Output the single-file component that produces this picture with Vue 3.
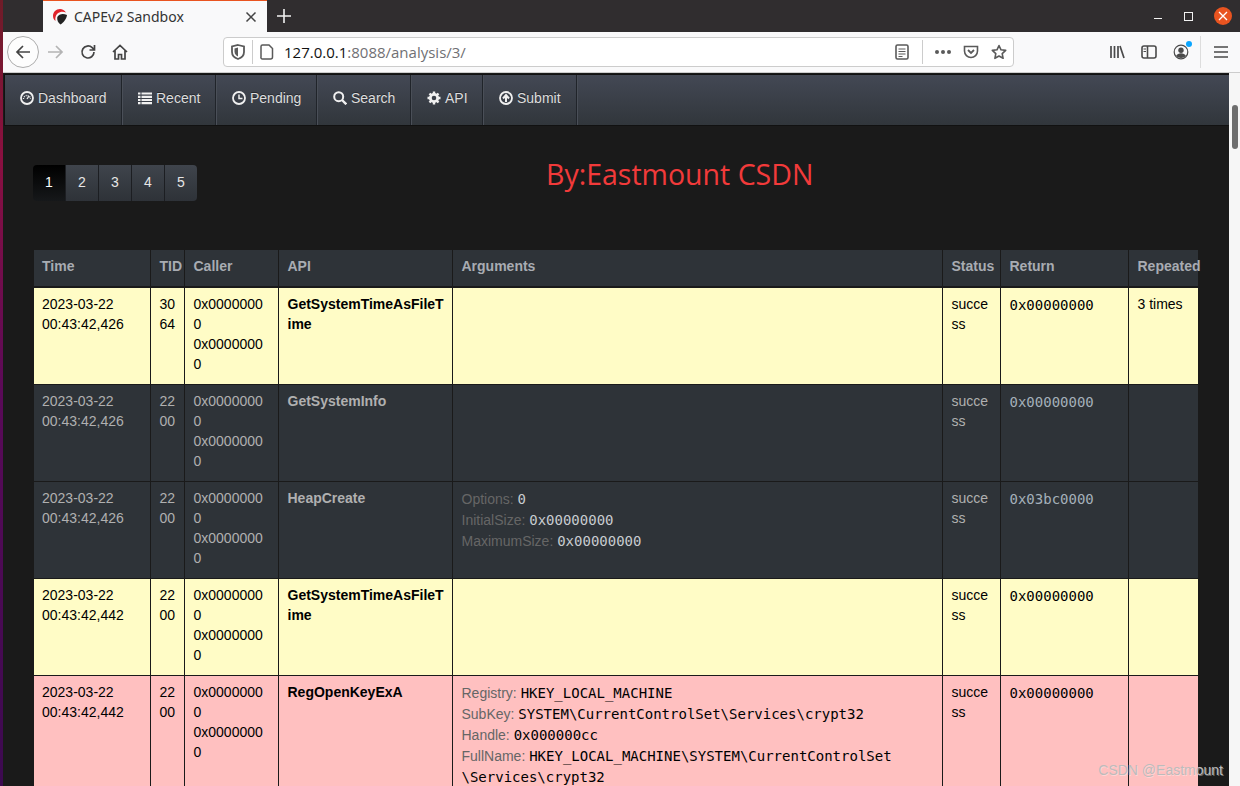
<script setup>
const navItems = [
  { label: "Dashboard", icon: "dash", width: 118 },
  { label: "Recent", icon: "list", width: 94 },
  { label: "Pending", icon: "clock", width: 101 },
  { label: "Search", icon: "search", width: 94 },
  { label: "API", icon: "cog", width: 72 },
  { label: "Submit", icon: "up", width: 94 },
];

const pages = [1, 2, 3, 4, 5];
const callers = ["0x00000000", "0x00000000"];

const rows = [
  { time: "2023-03-22 00:43:42,426", tid: "3064", api: "GetSystemTimeAsFileTime", args: [], ret: "0x00000000", repeated: "3 times", kind: "yellow" },
  { time: "2023-03-22 00:43:42,426", tid: "2200", api: "GetSystemInfo", args: [], ret: "0x00000000", repeated: "", kind: "dark" },
  {
    time: "2023-03-22 00:43:42,426", tid: "2200", api: "HeapCreate",
    args: [["Options", "0"], ["InitialSize", "0x00000000"], ["MaximumSize", "0x00000000"]],
    ret: "0x03bc0000", repeated: "", kind: "dark",
  },
  { time: "2023-03-22 00:43:42,442", tid: "2200", api: "GetSystemTimeAsFileTime", args: [], ret: "0x00000000", repeated: "", kind: "yellow" },
  {
    time: "2023-03-22 00:43:42,442", tid: "2200", api: "RegOpenKeyExA",
    args: [
      ["Registry", "HKEY_LOCAL_MACHINE"],
      ["SubKey", "SYSTEM\\CurrentControlSet\\Services\\crypt32"],
      ["Handle", "0x000000cc"],
      ["FullName", "HKEY_LOCAL_MACHINE\\SYSTEM\\CurrentControlSet\u200b\\Services\\crypt32"],
    ],
    ret: "0x00000000", repeated: "", kind: "pink",
  },
];
</script>

<template>
  <div class="window">
    <div class="titlebar">
      <div class="tab">
        <svg class="favicon" viewBox="0 0 16 17" width="16" height="17">
          <path d="M8 1C4 1 1 4 1 8c0 2 1 4 2.500 5C3 10 3.500 7.500 5.500 5.500 8 3.500 11 3 14 4.500 12.500 2.300 10.500 1 8 1z" fill="#e0242c" />
          <path d="M5.300 9C7 6 11 5.300 15 7c-.5 4-3.500 7.500-6.500 9.500C6 14.500 4.800 12 5.300 9z" fill="#222" />
        </svg>
        <span class="tab-title">CAPEv2 Sandbox</span>
        <svg class="tab-close" viewBox="0 0 12 12" width="12" height="12">
          <path d="M1.500 1.500l9 9m0-9l-9 9" stroke="#444" stroke-width="1.500" fill="none" />
        </svg>
      </div>
      <svg class="new-tab" viewBox="0 0 14 14" width="14" height="14">
        <path d="M7 0v14M0 7h14" stroke="#f2f2f2" stroke-width="1.600" />
      </svg>
      <div class="win-controls">
        <span class="win-min"></span>
        <span class="win-max"></span>
        <span class="win-close">
          <svg viewBox="0 0 10 10" width="10" height="10">
            <path d="M1 1l8 8m0-8l-8 8" stroke="#fff" stroke-width="1.300" />
          </svg>
        </span>
      </div>
    </div>

    <div class="toolbar">
      <div class="tb-btn back">
        <svg viewBox="0 0 16 16" width="16" height="16"><path d="M15 8H2M8 2L2 8l6 6" stroke="#444" stroke-width="1.700" fill="none" /></svg>
      </div>
      <div class="tb-btn">
        <svg viewBox="0 0 16 16" width="16" height="16"><path d="M0 8h14M8 2l6 6-6 6" stroke="#b4b4b4" stroke-width="1.700" fill="none" /></svg>
      </div>
      <div class="tb-btn">
        <svg viewBox="0 0 16 16" width="16" height="16"><path d="M14 8a6 6 0 1 1-1.800-4.300L14 5.500M14.500 1v5h-5" stroke="#444" stroke-width="1.700" fill="none" /></svg>
      </div>
      <div class="tb-btn">
        <svg viewBox="0 0 16 16" width="16" height="16"><path d="M1 8l7-6.500L15 8M3 6.500V15h3.500v-4.500h3V15H13V6.500" stroke="#444" stroke-width="1.700" fill="none" /></svg>
      </div>

      <div class="urlbar">
        <svg class="shield" viewBox="0 0 14 16" width="14" height="16"><path d="M7 1l6 1.500V8c0 3.500-3 6-6 7-3-1-6-3.500-6-7V2.500z" stroke="#5a5a5a" stroke-width="1.800" fill="none" /><path d="M7 3.500v9c-2-1-3.500-2.500-3.500-5V4.500z" fill="#5a5a5a" /></svg>
        <span class="url-sep"></span>
        <svg class="doc" viewBox="0 0 14 16" width="14" height="16"><path d="M2.500 1H9l3.500 3.500V13a2 2 0 0 1-2 2h-8a1.500 1.500 0 0 1-1.500-2V2.500A1.500 1.500 0 0 1 2.500 1z" stroke="#5a5a5a" stroke-width="1.500" fill="none" /></svg>
        <span class="url"><b>127.0.0.1</b>:8088/analysis/3/</span>
        <div class="url-right">
          <svg viewBox="0 0 14 16" width="14" height="16"><rect x="1" y="1" width="12" height="14" rx="1.500" stroke="#5a5a5a" stroke-width="1.600" fill="none" /><path d="M3.500 5h7M3.500 7.500h7M3.500 10h7M3.500 12.500h4" stroke="#5a5a5a" stroke-width="1" /></svg>
          <span class="url-sep right-sep"></span>
          <span class="dots"><i></i><i></i><i></i></span>
          <svg class="pocket" viewBox="0 0 16 14" width="16" height="14"><path d="M1.500 1.500h13V6a6.500 6.500 0 0 1-13 0z" stroke="#5a5a5a" stroke-width="1.600" fill="none" /><path d="M5 5l3 3 3-3" stroke="#5a5a5a" stroke-width="1.800" fill="none" /></svg>
          <svg class="star" viewBox="0 0 16 16" width="16" height="16"><path d="M8 1.500l2 4.300 4.700.6-3.500 3.200.9 4.700L8 12l-4.100 2.300.9-4.700L1.300 6.400 6 5.800z" stroke="#5a5a5a" stroke-width="1.600" fill="none" stroke-linejoin="round" /></svg>
        </div>
      </div>

      <div class="tb-right">
        <div class="tb-btn">
          <svg viewBox="0 0 16 16" width="16" height="16"><path d="M2 2v12M5.500 2v12M9 2v12M11 2l4 12" stroke="#4a4a4a" stroke-width="1.700" fill="none" /></svg>
        </div>
        <div class="tb-btn">
          <svg viewBox="0 0 16 14" width="16" height="14"><rect x="1" y="1" width="14" height="12" rx="2" stroke="#4a4a4a" stroke-width="1.600" fill="none" /><path d="M6.500 1v12" stroke="#4a4a4a" stroke-width="1.600" /><path d="M2.500 4h2.500M2.500 6.500h2.500" stroke="#4a4a4a" stroke-width="1" /></svg>
        </div>
        <div class="tb-btn account">
          <svg viewBox="0 0 16 16" width="16" height="16"><circle cx="8" cy="8" r="6.800" stroke="#4a4a4a" stroke-width="1.200" fill="none" /><circle cx="8" cy="6.300" r="2.700" fill="#4a4a4a" /><path d="M3 12c1-2 3-2.800 5-2.800s4 .8 5 2.800c-2.500 2.500-7.500 2.500-10 0z" fill="#4a4a4a" /></svg>
          <span class="badge"></span>
        </div>
      </div>
      <span class="tb-sep"></span>
      <svg class="menu" viewBox="0 0 14 12" width="14" height="12"><path d="M0 1h14M0 6h14M0 11h14" stroke="#4a4a4a" stroke-width="1.700" /></svg>
    </div>

    <div class="viewport">
      <main class="page">
        <nav class="navbar">
          <a v-for="item in navItems" :key="item.label" class="nav-item" :style="{ width: item.width + 'px' }">
            <svg viewBox="0 0 14 14" width="14" height="14" class="nav-icon">
              <template v-if="item.icon === 'dash'">
                <circle cx="7" cy="7" r="6" fill="none" stroke="#f0f0f0" stroke-width="1.800" />
                <path d="M3.500 8a3.500 3.500 0 0 1 7 0" fill="none" stroke="#f0f0f0" stroke-width="1.300" stroke-dasharray="1 1" />
                <path d="M7 8l2-3" stroke="#f0f0f0" stroke-width="1.300" />
              </template>
              <template v-else-if="item.icon === 'list'">
                <path d="M0 2.500h2.500M3.500 2.500H14M0 5.800h2.500M3.500 5.800H14M0 9h2.500M3.500 9H14M0 12.200h2.500M3.500 12.200H14" stroke="#f0f0f0" stroke-width="2.200" />
              </template>
              <template v-else-if="item.icon === 'clock'">
                <circle cx="7" cy="7" r="6" fill="none" stroke="#f0f0f0" stroke-width="1.800" />
                <path d="M7 3.500V7.500H10.500" fill="none" stroke="#f0f0f0" stroke-width="1.500" />
              </template>
              <template v-else-if="item.icon === 'search'">
                <circle cx="5.700" cy="5.700" r="4.500" fill="none" stroke="#f0f0f0" stroke-width="2" />
                <path d="M9 9l4.300 4.300" stroke="#f0f0f0" stroke-width="2.400" />
              </template>
              <template v-else-if="item.icon === 'cog'">
                <circle cx="7" cy="7" r="3.700" fill="none" stroke="#f0f0f0" stroke-width="2.800" />
                <path d="M7 .5V3M7 11v2.500M.5 7H3M11 7h2.500M2.500 2.500L4 4M10 10l1.500 1.500M11.500 2.500L10 4M2.500 11.500L4 10" stroke="#f0f0f0" stroke-width="2.400" />
              </template>
              <template v-else>
                <circle cx="7" cy="7" r="6" fill="none" stroke="#f0f0f0" stroke-width="1.800" />
                <path d="M7 11V5M4 7.500L7 4l3 3.500" fill="none" stroke="#f0f0f0" stroke-width="2" />
              </template>
            </svg>
            {{ item.label }}
          </a>
        </nav>

        <section class="pager-row">
          <ul class="pager">
            <li v-for="p in pages" :key="p" :class="{ active: p === 1 }">{{ p }}</li>
          </ul>
          <h2 class="banner">By:Eastmount CSDN</h2>
        </section>

        <table class="calls">
          <colgroup>
            <col style="width: 116px" />
            <col style="width: 34px" />
            <col style="width: 94px" />
            <col style="width: 174px" />
            <col style="width: 490px" />
            <col style="width: 58px" />
            <col style="width: 128px" />
            <col style="width: 70px" />
          </colgroup>
          <thead>
            <tr>
              <th>Time</th>
              <th>TID</th>
              <th>Caller</th>
              <th>API</th>
              <th>Arguments</th>
              <th>Status</th>
              <th>Return</th>
              <th>Repeated</th>
            </tr>
          </thead>
          <tbody>
            <tr v-for="(row, i) in rows" :key="i" :class="row.kind">
              <td>{{ row.time }}</td>
              <td>{{ row.tid }}</td>
              <td>
                <div v-for="(c, j) in callers" :key="j">{{ c }}</div>
              </td>
              <td class="api">{{ row.api }}</td>
              <td class="args">
                <div v-for="arg in row.args" :key="arg[0]">
                  <span class="arg-name">{{ arg[0] }}:</span>
                  {{ " " }}<code>{{ arg[1] }}</code>
                </div>
              </td>
              <td>success</td>
              <td class="ret"><code>{{ row.ret }}</code></td>
              <td>{{ row.repeated }}</td>
            </tr>
          </tbody>
        </table>
      </main>

      <div class="scrollbar"><span class="thumb"></span></div>
    </div>

    <div class="watermark">CSDN @Eastmount</div>
  </div>
</template>

<style>
html,
body {
  margin: 0;
  height: 786px;
  overflow: hidden;
}
</style>

<style scoped>
.window {
  position: relative;
  width: 1240px;
  height: 786px;
  box-sizing: border-box;
  padding-left: 3px;
  display: flex;
  flex-direction: column;
  overflow: hidden;
  background: linear-gradient(#6e1c28, #8a1040 20%, #5a0a58 50%, #3c0a50);
  font-family: "Liberation Sans", Arial, sans-serif;
}

/* browser chrome */
.titlebar {
  height: 32px;
  flex: none;
  display: flex;
  align-items: center;
  background: #302d2f;
  padding-left: 40px;
}

.tab {
  width: 224px;
  height: 32px;
  box-sizing: border-box;
  border-top: 1px solid #e95420;
  background: #f9f9fa;
  display: flex;
  align-items: center;
  padding: 0 10px 0 9px;
  font-family: "Noto Sans", sans-serif;
  font-size: 14px;
  color: #333;
}

.favicon {
  flex: none;
}

.tab-title {
  margin-left: 6px;
  flex: 1;
}

.new-tab {
  margin-left: 10px;
}

.win-controls {
  margin-left: auto;
  display: flex;
  align-items: center;
  padding-right: 8px;
}

.win-min {
  width: 8px;
  height: 1px;
  background: #f2f2f2;
  margin: 5px 0 0 0;
}

.win-max {
  width: 7px;
  height: 7px;
  border: 1px solid #f2f2f2;
  margin-left: 22px;
}

.win-close {
  width: 18px;
  height: 18px;
  margin-left: 21px;
  border-radius: 50%;
  background: #e95420;
  display: flex;
  align-items: center;
  justify-content: center;
}

.toolbar {
  height: 41px;
  flex: none;
  box-sizing: border-box;
  display: flex;
  align-items: center;
  background: #f9f9fa;
  border-bottom: 1px solid #ccc;
  padding-left: 4px;
}

.tb-btn {
  position: relative;
  width: 32px;
  height: 32px;
  flex: none;
  display: flex;
  align-items: center;
  justify-content: center;
}

.back {
  box-sizing: border-box;
  border: 1px solid #adadad;
  border-radius: 50%;
  background: #fdfdfd;
  margin-right: 1px;
}

.urlbar {
  width: 791px;
  height: 30px;
  margin-left: 87px;
  box-sizing: border-box;
  display: flex;
  align-items: center;
  background: #fff;
  border: 1px solid #ccc;
  border-radius: 4px;
  padding-left: 7px;
}

.url-sep {
  width: 1px;
  height: 24px;
  background: #ccc;
  margin: 0 7px 0 7px;
}

.url {
  margin-left: 10px;
  font-family: "Open Sans", sans-serif;
  font-size: 15px;
  color: #707074;
}

.url b {
  font-weight: 400;
  color: #111;
}

.url-right {
  margin-left: auto;
  display: flex;
  align-items: center;
  padding-right: 6px;
}

.right-sep {
  margin: 0 0 0 13px;
}

.dots {
  display: flex;
  gap: 2px;
  margin-left: 12px;
}

.dots i {
  width: 4px;
  height: 4px;
  border-radius: 50%;
  background: #5a5a5a;
}

.pocket {
  margin-left: 12px;
}

.star {
  margin-left: 12px;
}

.tb-right {
  display: flex;
  margin-left: 87px;
}

.badge {
  position: absolute;
  top: 5px;
  right: 5px;
  width: 6px;
  height: 6px;
  border-radius: 50%;
  background: #0aa5ff;
}

.tb-sep {
  width: 1px;
  height: 32px;
  background: #ddd;
  margin-left: 3px;
}

.menu {
  margin-left: 13px;
}

/* page */
.viewport {
  flex: 1;
  min-height: 0;
  display: flex;
}

.page {
  width: 1226px;
  background: #1a1a1a;
  overflow: hidden;
  box-sizing: border-box;
  padding-top: 1px;
}

.navbar {
  height: 52px;
  box-sizing: border-box;
  margin-left: 1px;
  display: flex;
  background: linear-gradient(#434854, #31363b);
  border: 1px solid #111;
  border-right: 0;
}

.nav-item {
  box-sizing: border-box;
  flex: none;
  display: flex;
  align-items: center;
  gap: 4px;
  padding: 0 0 4px 15px;
  border-right: 1px solid #4a4f58;
  box-shadow: inset -1px 0 0 #20242a;
  font-size: 14px;
  color: #dddddd;
  text-shadow: 0 -1px 0 rgba(0, 0, 0, 0.4);
}

.pager-row {
  display: flex;
  padding: 39px 0 0 30px;
  height: 85px;
}

.pager {
  list-style: none;
  margin: 0;
  padding: 0;
  display: flex;
  width: 164px;
  height: 36px;
  border-radius: 4px;
  overflow: hidden;
}

.pager li {
  flex: 1;
  box-sizing: border-box;
  padding-bottom: 2px;
  display: flex;
  align-items: center;
  justify-content: center;
  border-right: 1px solid #1c1e22;
  font-size: 14px;
  color: #e6e6e6;
  background: linear-gradient(#3f444c, #2e3238);
}

.pager li:last-child {
  border-right: 0;
}

.pager li.active {
  background: linear-gradient(#000, #16181a);
  color: #fff;
}

.banner {
  margin: -11px 0 0 349px;
  font-family: "Open Sans", sans-serif;
  font-size: 28.5px;
  font-weight: 400;
  line-height: 40px;
  color: #f23a3a;
}

.calls {
  width: 1164px;
  margin-left: 31px;
  table-layout: fixed;
  border-collapse: collapse;
  font-size: 14px;
  line-height: 20px;
}

.calls th,
.calls td {
  padding: 6px 7px 10px 9px;
  text-align: left;
  vertical-align: top;
  overflow-wrap: break-word;
  border: 1px solid #1a1a1a;
}

.calls th:first-child,
.calls td:first-child {
  padding-left: 8px;
  border-left: 0;
}

.calls th:last-child,
.calls td:last-child {
  border-right: 0;
}

.calls th {
  background: #2e3338;
  color: #a8acb2;
  font-weight: bold;
  white-space: nowrap;
  border-top: 0;
  border-bottom-width: 2px;
}

.calls td {
  border-bottom-width: 1px;
}

.calls td.args {
  line-height: 21px;
  padding-top: 7px;
  padding-bottom: 0;
}

.calls td.ret {
  padding-top: 7px;
  padding-bottom: 0;
}

.dark td {
  background: #2e3338;
  color: #b0b0b0;
}

.yellow td {
  background: #fffcc6;
  color: #000;
}

.pink td {
  background: #ffc0c0;
  color: #000;
}

.api {
  font-weight: bold;
}

.arg-name {
  color: #666;
}

code {
  font-family: "DejaVu Sans Mono", monospace;
  font-size: 14px;
}

.dark .args code {
  color: #c8ccd0;
}

.dark .ret code {
  color: #a4b0ba;
}

/* scrollbar */
.scrollbar {
  flex: 1;
  background: #f6f6f6;
  padding: 32px 0 0 3px;
}

.thumb {
  display: block;
  width: 6px;
  height: 44px;
  background: #6e6e6e;
  border-radius: 3px;
}

.watermark {
  position: absolute;
  right: 17px;
  bottom: 8px;
  font-family: "Liberation Sans", sans-serif;
  font-size: 14px;
  color: #bcbcbc;
  text-shadow: 1px 1px 0 rgba(255, 255, 255, 0.35);
}
</style>
